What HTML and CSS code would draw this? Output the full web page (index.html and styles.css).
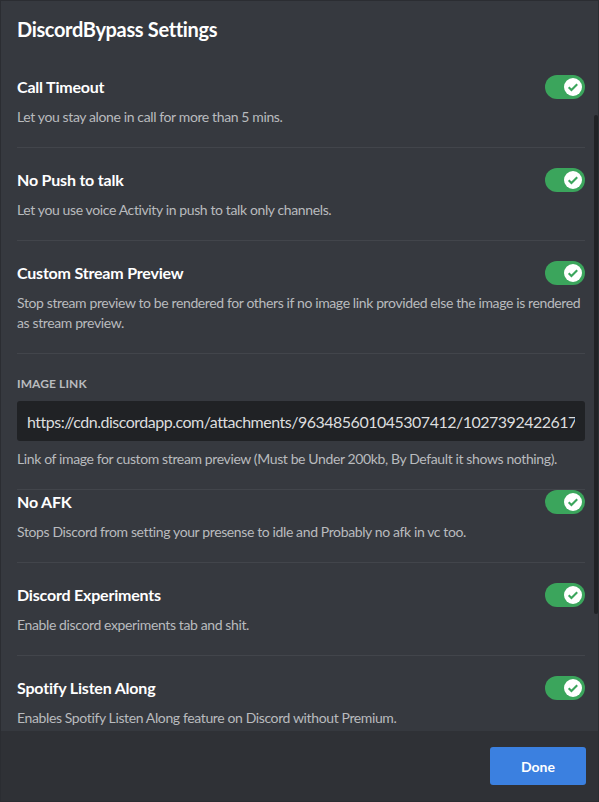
FILE: index.html
```html
<!DOCTYPE html>
<html>
<head>
<meta charset="utf-8">
<link rel="stylesheet" href="styles.css">
</head>
<body>
<div class="modal">
  <div class="header"><h2 class="heading">DiscordBypass Settings</h2></div>
  <div class="content">
    <div class="item">
      <div class="row"><span class="title">Call Timeout</span><span class="switch"><span class="knob"><svg viewBox="0 0 20 20" width="18" height="18"><path d="M5.2 10.3l3.1 3.1 6.4-6.4" fill="none" stroke="#3ba55c" stroke-width="2.3"/></svg></span></span></div>
      <div class="note">Let you stay alone in call for more than 5 mins.</div>
      <div class="divider"></div>
    </div>
    <div class="item">
      <div class="row"><span class="title">No Push to talk</span><span class="switch"><span class="knob"><svg viewBox="0 0 20 20" width="18" height="18"><path d="M5.2 10.3l3.1 3.1 6.4-6.4" fill="none" stroke="#3ba55c" stroke-width="2.3"/></svg></span></span></div>
      <div class="note">Let you use voice Activity in push to talk only channels.</div>
      <div class="divider"></div>
    </div>
    <div class="item">
      <div class="row"><span class="title">Custom Stream Preview</span><span class="switch"><span class="knob"><svg viewBox="0 0 20 20" width="18" height="18"><path d="M5.2 10.3l3.1 3.1 6.4-6.4" fill="none" stroke="#3ba55c" stroke-width="2.3"/></svg></span></span></div>
      <div class="note">Stop stream preview to be rendered for others if no image link provided else the image is rendered as stream preview.</div>
      <div class="divider"></div>
    </div>
    <div class="field">
      <h5 class="label">Image Link</h5>
      <input class="input" type="text" value="https://cdn.discordapp.com/attachments/963485601045307412/1027392422617419836/image.png">
      <div class="note">Link of image for custom stream preview (Must be Under 200kb, By Default it shows nothing).</div>
      <div class="divider"></div>
    </div>
    <div class="item">
      <div class="row"><span class="title">No AFK</span><span class="switch"><span class="knob"><svg viewBox="0 0 20 20" width="18" height="18"><path d="M5.2 10.3l3.1 3.1 6.4-6.4" fill="none" stroke="#3ba55c" stroke-width="2.3"/></svg></span></span></div>
      <div class="note">Stops Discord from setting your presense to idle and Probably no afk in vc too.</div>
      <div class="divider"></div>
    </div>
    <div class="item">
      <div class="row"><span class="title">Discord Experiments</span><span class="switch"><span class="knob"><svg viewBox="0 0 20 20" width="18" height="18"><path d="M5.2 10.3l3.1 3.1 6.4-6.4" fill="none" stroke="#3ba55c" stroke-width="2.3"/></svg></span></span></div>
      <div class="note">Enable discord experiments tab and shit.</div>
      <div class="divider"></div>
    </div>
    <div class="item">
      <div class="row"><span class="title">Spotify Listen Along</span><span class="switch"><span class="knob"><svg viewBox="0 0 20 20" width="18" height="18"><path d="M5.2 10.3l3.1 3.1 6.4-6.4" fill="none" stroke="#3ba55c" stroke-width="2.3"/></svg></span></span></div>
      <div class="note">Enables Spotify Listen Along feature on Discord without Premium.</div>
      <div class="divider"></div>
    </div>
  </div>
  <div class="footer"><button class="done">Done</button></div>
  <div class="thumb"></div>
</div>
</body>
</html>
```
FILE: styles.css
```css
* { box-sizing: border-box; }
html, body { margin: 0; padding: 0; background: #2a2c31; }
body { font-family: Lato, "Noto Sans", sans-serif; }
.modal {
  position: relative;
  width: 599px;
  height: 802px;
  background: #36393f;
  border: 1px solid #2b2d32;
  display: flex;
  flex-direction: column;
  overflow: hidden;
}
.header { padding: 16px 16px 18px 16px; flex: none; }
.heading {
  margin: 0;
  font-size: 20px;
  line-height: 24px;
  font-weight: 700;
  color: #ffffff;
  letter-spacing: -0.35px;
}
.content {
  flex: 1;
  overflow: hidden;
  padding: 16px 13px 0 16px;
}
.item { margin-bottom: 20px; }
.row { display: flex; align-items: center; justify-content: space-between; height: 24px; }
.title { font-size: 16px; font-weight: 700; color: #ffffff; line-height: 24px; letter-spacing: -0.2px; }
.note { margin-top: 8px; font-size: 14px; line-height: 20px; color: #b9bbbe; letter-spacing: -0.38px; }
.divider { margin-top: 20px; height: 1px; background: #42454b; }
.switch {
  width: 40px; height: 24px; border-radius: 14px;
  background: #3ba55c; display: flex; align-items: center; justify-content: flex-end;
  padding-right: 3px;
}
.knob {
  width: 18px; height: 18px; border-radius: 50%; background: #fff;
  display: flex; align-items: center; justify-content: center;
}
.knob svg { display: block; }
.label {
  margin: 0 0 9px 0; font-size: 12px; line-height: 16px; font-weight: 700;
  text-transform: uppercase; color: #b9bbbe; letter-spacing: 0.1px;
}
.field { padding-top: 2px; }
.input {
  display: block; width: 100%; height: 40px; border: none; outline: none;
  border-radius: 3px; background: #202225; color: #dcddde;
  font-family: inherit; font-size: 16px; padding: 0 10px; margin: 0;
  letter-spacing: -0.5px;
}
.field .note { margin-top: 8px; }
.footer {
  flex: none; height: 70px; background: #2f3136;
  display: flex; justify-content: flex-end; align-items: flex-start;
  padding: 16px 12px 0 16px;
}
.done {
  width: 96px; height: 38px; border: none; border-radius: 3px;
  background: #3b80e0; color: #fff; font-family: inherit;
  font-size: 14px; font-weight: 700; margin: 0; padding: 0;
}
.thumb {
  position: absolute; right: 0; top: 114px; width: 4px; height: 499px;
  border-radius: 2px; background: #202225;
}
```
